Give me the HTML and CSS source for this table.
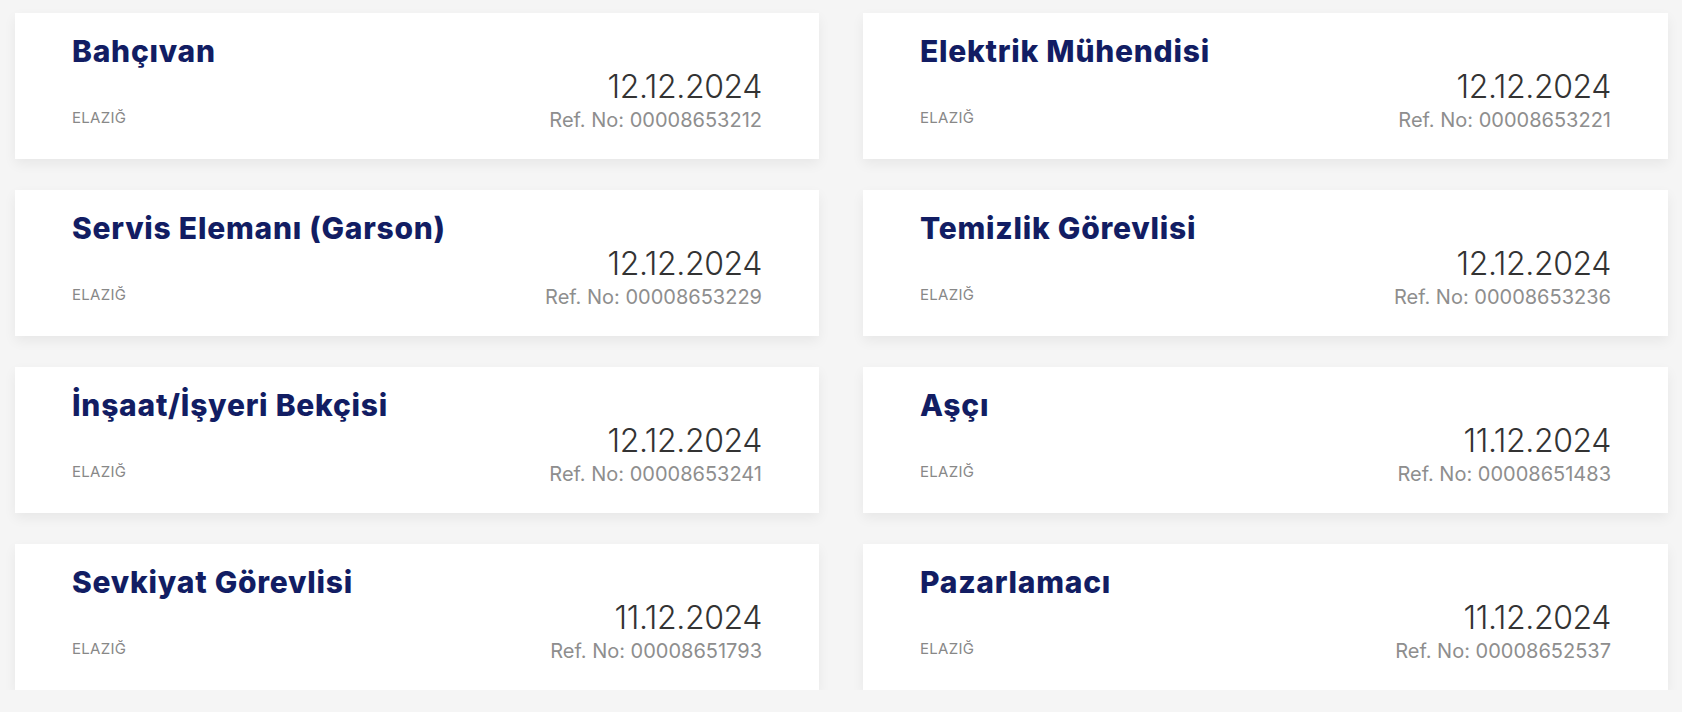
FILE: index.html
```html
<!DOCTYPE html>
<html lang="tr">
<head>
<meta charset="utf-8">
<title>İlanlar</title>
<link rel="stylesheet" href="styles.css">
</head>
<body>
<main class="grid">
  <article class="card">
    <h2 class="title">Bahçıvan</h2>
    <div class="meta">
      <span class="loc">ELAZIĞ</span>
      <div class="right"><div class="date">12.12.2024</div><div class="ref">Ref. No: 00008653212</div></div>
    </div>
  </article>
  <article class="card">
    <h2 class="title">Elektrik Mühendisi</h2>
    <div class="meta">
      <span class="loc">ELAZIĞ</span>
      <div class="right"><div class="date">12.12.2024</div><div class="ref">Ref. No: 00008653221</div></div>
    </div>
  </article>
  <article class="card">
    <h2 class="title">Servis Elemanı (Garson)</h2>
    <div class="meta">
      <span class="loc">ELAZIĞ</span>
      <div class="right"><div class="date">12.12.2024</div><div class="ref">Ref. No: 00008653229</div></div>
    </div>
  </article>
  <article class="card">
    <h2 class="title">Temizlik Görevlisi</h2>
    <div class="meta">
      <span class="loc">ELAZIĞ</span>
      <div class="right"><div class="date">12.12.2024</div><div class="ref">Ref. No: 00008653236</div></div>
    </div>
  </article>
  <article class="card">
    <h2 class="title">İnşaat/İşyeri Bekçisi</h2>
    <div class="meta">
      <span class="loc">ELAZIĞ</span>
      <div class="right"><div class="date">12.12.2024</div><div class="ref">Ref. No: 00008653241</div></div>
    </div>
  </article>
  <article class="card">
    <h2 class="title">Aşçı</h2>
    <div class="meta">
      <span class="loc">ELAZIĞ</span>
      <div class="right"><div class="date">11.12.2024</div><div class="ref">Ref. No: 00008651483</div></div>
    </div>
  </article>
  <article class="card">
    <h2 class="title">Sevkiyat Görevlisi</h2>
    <div class="meta">
      <span class="loc">ELAZIĞ</span>
      <div class="right"><div class="date">11.12.2024</div><div class="ref">Ref. No: 00008651793</div></div>
    </div>
  </article>
  <article class="card">
    <h2 class="title">Pazarlamacı</h2>
    <div class="meta">
      <span class="loc">ELAZIĞ</span>
      <div class="right"><div class="date">11.12.2024</div><div class="ref">Ref. No: 00008652537</div></div>
    </div>
  </article>
</main>
</body>
</html>
```

FILE: styles.css
```css
html, body {
  margin: 0;
  padding: 0;
  background: #f5f5f5;
  font-family: Inter, "Noto Sans", sans-serif;
}

.grid {
  display: grid;
  grid-template-columns: 804px 805px;
  column-gap: 44px;
  row-gap: 31px;
  padding: 13px 14px 0 15px;
}

.card {
  box-sizing: border-box;
  height: 146px;
  background: #fff;
  box-shadow: 0 5px 12px rgba(0, 0, 0, 0.06);
  padding: 19px 57px 0 57px;
  display: flex;
  flex-direction: column;
}

.title {
  margin: 0;
  font-size: 30px;
  line-height: 38px;
  font-weight: 800;
  color: #121d63;
  letter-spacing: 0.75px;
}

.meta {
  display: flex;
  justify-content: space-between;
  align-items: flex-end;
  margin-top: -1px;
}

.loc {
  font-size: 15px;
  line-height: 20px;
  color: #888;
  letter-spacing: 0.3px;
  margin-bottom: 5px;
}

.right {
  text-align: right;
}

.date {
  font-size: 32px;
  line-height: 36px;
  font-weight: 300;
  color: #333;
  letter-spacing: -0.4px;
}

.ref {
  font-size: 20px;
  line-height: 26px;
  color: #8e8e8e;
  margin-top: 2px;
}
```
